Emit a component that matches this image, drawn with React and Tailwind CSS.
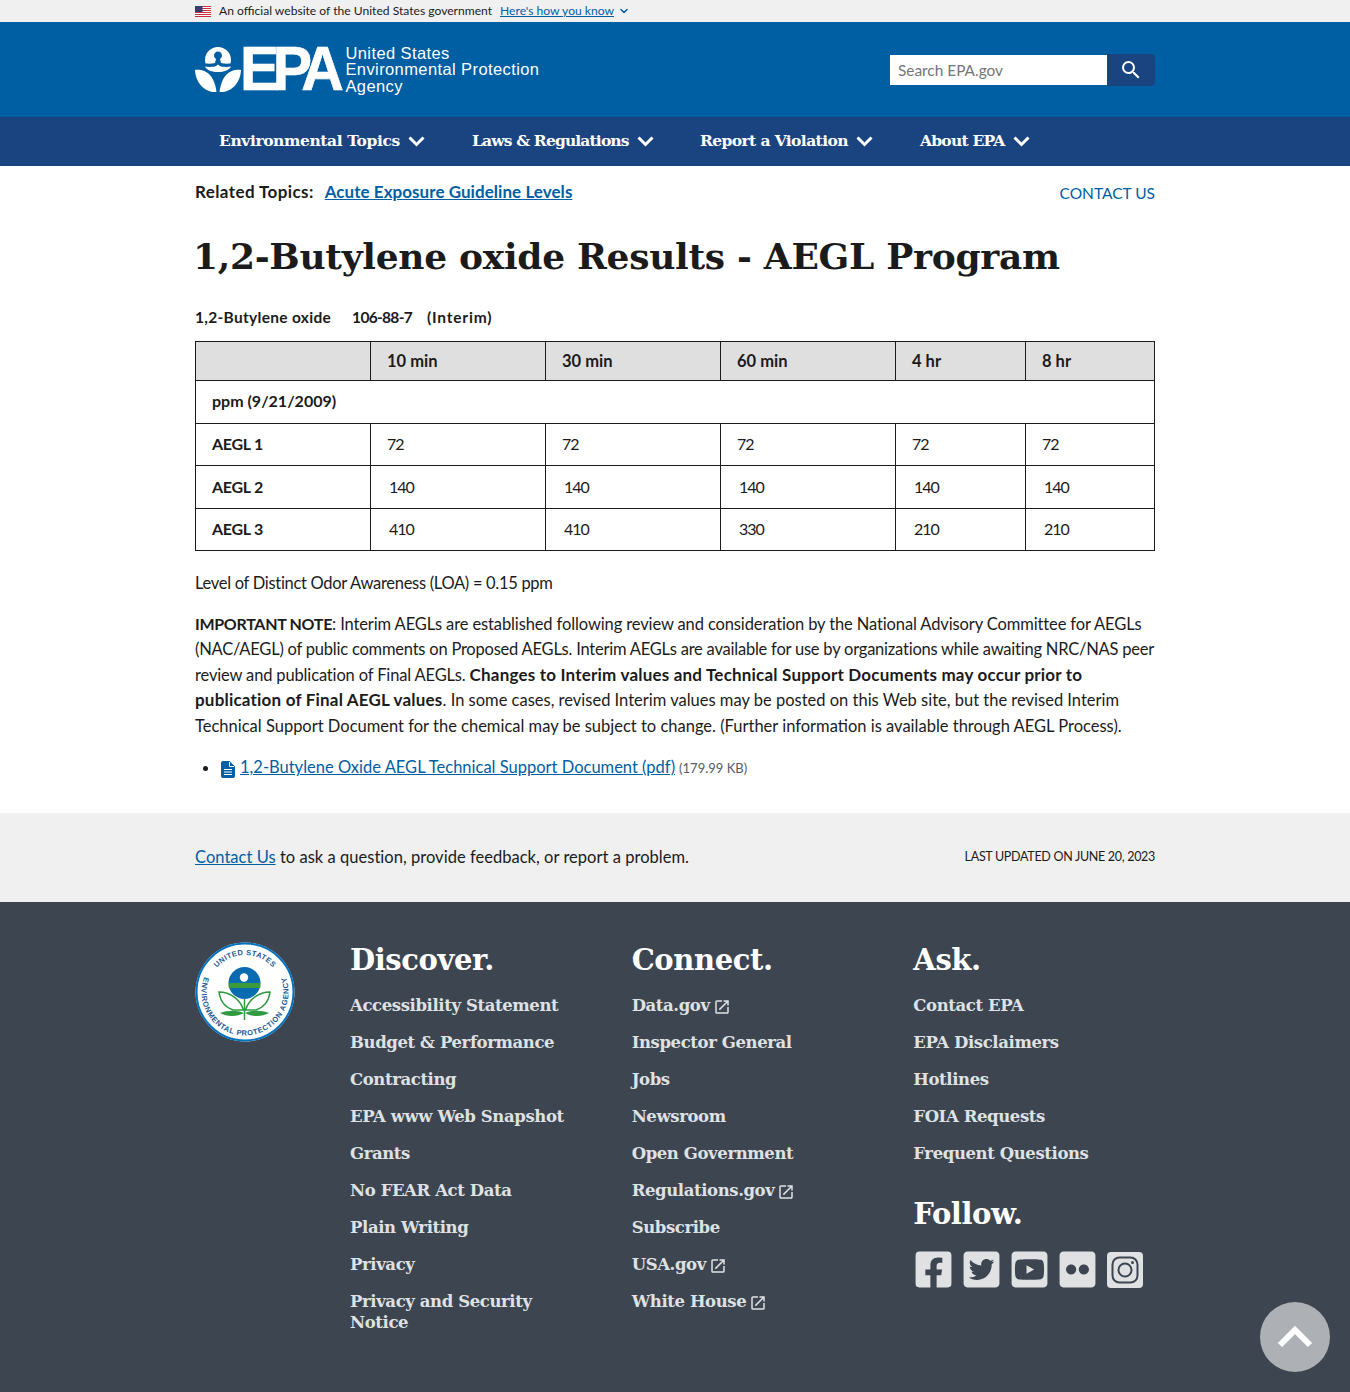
import React from 'react';
import { ChevronDown } from 'lucide-react';
import { FaFacebookSquare, FaTwitterSquare, FaYoutubeSquare, FaFlickr } from 'react-icons/fa';

const SERIF = "font-['DejaVu_Serif',serif]";
const SANS = "font-['Lato','Noto_Sans',sans-serif]";

const navItems = [
  { label: 'Environmental Topics', cls: 'w-[253px]', track: 'tracking-[-0.4px]' },
  { label: 'Laws & Regulations', cls: 'w-[228px]', track: 'tracking-[-0.85px]' },
  { label: 'Report a Violation', cls: 'w-[220px]', track: 'tracking-[-0.6px]' },
  { label: 'About EPA', cls: 'w-[200px]', track: 'tracking-[-0.75px]' },
];

const rows = [
  ['AEGL 1', '72', '72', '72', '72', '72'],
  ['AEGL 2', '140', '140', '140', '140', '140'],
  ['AEGL 3', '410', '410', '330', '210', '210'],
];

const discover = ['Accessibility Statement', 'Budget & Performance', 'Contracting', 'EPA www Web Snapshot', 'Grants', 'No FEAR Act Data', 'Plain Writing', 'Privacy', 'Privacy and Security Notice'];
const connect = [['Data.gov', true], ['Inspector General'], ['Jobs'], ['Newsroom'], ['Open Government'], ['Regulations.gov', true], ['Subscribe'], ['USA.gov', true], ['White House', true]];
const ask = ['Contact EPA', 'EPA Disclaimers', 'Hotlines', 'FOIA Requests', 'Frequent Questions'];

function Flag() {
  return (
    <svg width="16" height="11" viewBox="0 0 16 11" className="shrink-0">
      <rect width="16" height="11" fill="#fff" />
      <path d="M0 .5h16M0 2.5h16M0 4.5h16M0 6.5h16M0 8.5h16M0 10.5h16" stroke="#c8313e" strokeWidth="1" />
      <rect width="7.5" height="6" fill="#3c3b6e" />
    </svg>
  );
}

function EpaMark() {
  return (
    <svg width="46" height="46" viewBox="0 0 46 46" className="shrink-0">
      <path d="M10 13a13 13 0 0 1 26 0c0 1.500-.2 2.500-.6 3.500-3 .3-6.500.2-9.400-.5l-1-4a4 4 0 1 0-4 0l-1 4c-2.900.7-6.400.8-9.400.5-.4-1-.6-2-.6-3.500z" fill="#fff" />
      <path d="M10 19.500c4 .7 9 .5 11-.5l2-1.500 2 1.500c2 1 7 1.200 11 .5-2 4-7 5.500-13 5.500s-11-1.500-13-5.500z" fill="#fff" />
      <path d="M0 23c9-1 19 3 21.500 22C10 46 .5 36 0 23z" fill="#fff" />
      <path d="M46 23c-9-1-19 3-21.500 22C36 46 45.500 36 46 23z" fill="#fff" />
    </svg>
  );
}

function Seal() {
  return (
    <svg width="100" height="100" viewBox="0 0 100 100" className="shrink-0">
      <defs>
        <path id="sealTop" d="M13 50a37 37 0 0 1 74 0" />
        <path id="sealBottom" d="M10.600 31.600A43.500 43.500 0 1 0 89.400 31.600" />
      </defs>
      <circle cx="50" cy="50" r="49.500" fill="#fff" />
      <circle cx="50" cy="50" r="48.500" fill="none" stroke="#0071bc" strokeWidth="2" />
      <text fontSize="7.500" fontWeight="700" fill="#1d5a94" fontFamily="Liberation Sans, sans-serif" letterSpacing=".4" textAnchor="middle">
        <textPath href="#sealTop" startOffset="50%">UNITED STATES</textPath>
      </text>
      <text fontSize="7.500" fontWeight="700" fill="#1d5a94" fontFamily="Liberation Sans, sans-serif" letterSpacing=".55" textAnchor="middle">
        <textPath href="#sealBottom" startOffset="50%">ENVIRONMENTAL PROTECTION AGENCY</textPath>
      </text>
      <circle cx="49.500" cy="41" r="16" fill="#0b6bb0" />
      <rect x="33.700" y="41" width="31.600" height="5" fill="#3c9a3c" />
      <circle cx="49" cy="35.500" r="4.200" fill="#fff" />
      <path d="M49.500 57v21" stroke="#2f9a40" strokeWidth="1.500" />
      <path d="M48.500 68C45 57 35 50 24 50c1 9 6 15 14 18h10.500z" fill="#fff" stroke="#2f9a40" strokeWidth="1.500" />
      <path d="M50.500 68c3.500-11 13.500-18 24.500-18-1 9-6 15-14 18H50.500z" fill="#fff" stroke="#2f9a40" strokeWidth="1.500" />
      <path d="M25 71c8-3 17-3 24 0-7 4-17 4-24 0zM74 71c-8-3-17-3-24 0 7 4 17 4 24 0z" fill="#2f9a40" />
    </svg>
  );
}

function InstagramIcon() {
  return (
    <svg viewBox="0 0 36 36" className="w-9 h-9">
      <rect width="36" height="36" rx="4" fill="#dfe1e2" />
      <rect x="5.500" y="5.500" width="25" height="25" rx="7" fill="none" stroke="#3d4551" strokeWidth="2" />
      <circle cx="18" cy="18" r="6.500" fill="none" stroke="#3d4551" strokeWidth="2" />
      <circle cx="25.500" cy="10.500" r="1.500" fill="#3d4551" />
    </svg>
  );
}

function LaunchIcon() {
  return (
    <svg viewBox="0 0 24 24" className="inline-block w-[18px] h-[18px] ml-[3px] mb-[-2px] fill-[#dfe1e2]">
      <path d="M19 19H5V5h7V3H5a2 2 0 0 0-2 2v14a2 2 0 0 0 2 2h14c1.100 0 2-.9 2-2v-7h-2v7zM14 3v2h3.590l-9.830 9.830 1.410 1.410L19 6.410V10h2V3h-7z" />
    </svg>
  );
}

function SocialIcon({ Icon }) {
  return (
    <span className="w-9 h-9 flex items-center justify-center">
      <Icon className="w-[41px] h-[41px] shrink-0" />
    </span>
  );
}

function FooterLink({ children, ext }) {
  return (
    <a className={`${SERIF} block text-[#dfe1e2] text-[16.500px] font-bold leading-[21px] mb-4 tracking-[-0.4px]`}>
      {children}
      {ext && <LaunchIcon />}
    </a>
  );
}

function FooterHeading({ children, cls = '' }) {
  return <h2 className={`${SERIF} text-white text-[29px] font-bold leading-[38px] tracking-[-0.4px] ${cls}`}>{children}</h2>;
}

export default function App() {
  return (
    <div className={`${SANS} relative min-h-screen flex flex-col text-[#1b1b1b] text-[16.500px]`}>
      <div className="bg-[#f0f0f0] h-[22px]">
        <div className="w-[960px] mx-auto flex items-center h-full text-[12.100px]">
          <Flag />
          <span className="ml-2">An official website of the United States government</span>
          <a className="ml-2 text-[#005ea2] underline">Here's how you know</a>
          <ChevronDown className="w-3 h-3 ml-[4px] text-[#005ea2]" strokeWidth={3} />
        </div>
      </div>

      <header className="bg-[#005ea2] h-[95px]">
        <div className="w-[960px] mx-auto h-full flex items-center justify-between">
          <div className="flex items-center">
            <EpaMark />
            <span className="font-['Liberation_Sans',sans-serif] font-bold text-white text-[59px] leading-none tracking-[-6.500px] scale-y-[1.07] ml-[-1px] mr-[8px] [-webkit-text-stroke:0.6px_white]">EPA</span>
            <div className="font-['Liberation_Sans',sans-serif] text-white text-[16.500px] leading-[16.500px] tracking-[0.4px]">
              <div>United States</div>
              <div>Environmental Protection</div>
              <div>Agency</div>
            </div>
          </div>
          <div className="flex items-center">
            <input
              readOnly
              placeholder="Search EPA.gov"
              className="w-[217px] h-[30px] bg-white px-2 text-[15.400px] placeholder:text-[#71767a] outline-none"
            />
            <button className="w-[48px] h-[32px] bg-[#1a4480] rounded-r flex items-center justify-center pr-[1px]">
              <svg viewBox="0 0 24 24" className="w-6 h-6 fill-white">
                <path d="M15.500 14h-.79l-.28-.27A6.471 6.471 0 0 0 16 9.500 6.500 6.500 0 1 0 9.500 16c1.610 0 3.090-.59 4.230-1.570l.27.28v.79l5 4.990L20.490 19l-4.990-5zm-6 0C7.010 14 5 11.990 5 9.500S7.010 5 9.500 5 14 7.010 14 9.500 11.990 14 9.500 14z" />
              </svg>
            </button>
          </div>
        </div>
      </header>

      <nav className="bg-[#1a4480] h-[49px]">
        <div className="w-[960px] mx-auto h-full flex items-center pl-6 pb-[1px]">
          {navItems.map(item => (
            <div key={item.label} className={`${item.cls} flex items-center text-white`}>
              <span className={`${SERIF} text-[15.500px] font-bold ${item.track}`}>{item.label}</span>
              <svg width="17" height="11" viewBox="0 0 17 11" fill="none" className="ml-2 mt-[1px]">
                <path d="M1.500 1.500l7 7 7-7" stroke="#fff" strokeWidth="3" />
              </svg>
            </div>
          ))}
        </div>
      </nav>

      <main className="w-[960px] mx-auto">
        <div className="flex justify-between pt-[13px] h-[58px]">
          <div className="leading-[25px] font-bold text-[17px]">
            <span className="tracking-[0.4px]">Related Topics:</span>
            <a className="ml-[11px] text-[#005ea2] underline tracking-[0.05px]">Acute Exposure Guideline Levels</a>
          </div>
          <a className="text-[#005ea2] text-[15.500px] mt-[2px] leading-[25px]">CONTACT US</a>
        </div>

        <h1 className={`${SERIF} text-[36px] font-bold leading-[64px] tracking-[-0.3px] ml-[-2px]`}>
          1,2-Butylene oxide Results - AEGL Program
        </h1>

        <p className="flex font-bold text-[15.500px] leading-[20px] mt-[19px] mb-[14px]">
          <span className="tracking-[0.3px]">1,2-Butylene oxide</span>
          <span className="ml-[21px] tracking-[-0.7px]">106-88-7</span>
          <span className="ml-[15px] tracking-[0.8px]">(Interim)</span>
        </p>

        <table className="w-[959px] table-fixed border-collapse border border-[#1b1b1b] text-[16px]">
          <colgroup>
            <col className="w-[175px]" />
            <col className="w-[175px]" />
            <col className="w-[175px]" />
            <col className="w-[175px]" />
            <col className="w-[130px]" />
            <col className="w-[129px]" />
          </colgroup>
          <thead>
            <tr className="h-[39px] bg-[#dfdfdf] font-bold text-[16.500px]">
              {['', '10 min', '30 min', '60 min', '4 hr', '8 hr'].map((h, i) => (
                <th key={i} className="border border-[#1b1b1b] px-4 text-left">{h}</th>
              ))}
            </tr>
          </thead>
          <tbody>
            <tr className="h-[42.500px]">
              <td colSpan={6} className="border border-[#1b1b1b] px-4 font-bold pb-[2px]">ppm (9/21/2009)</td>
            </tr>
            {rows.map(row => (
              <tr key={row[0]} className="h-[42.500px]">
                {row.map((cell, i) => (
                  <td key={i} className={`border border-[#1b1b1b] px-4 ${i === 0 ? 'font-bold tracking-[-0.3px]' : 'tracking-[-1px]'} ${cell.length === 3 ? 'pl-[18px]' : ''}`}>{cell}</td>
                ))}
              </tr>
            ))}
          </tbody>
        </table>

        <p className="mt-[20px] leading-[25.500px] tracking-[-0.3px]">Level of Distinct Odor Awareness (LOA) = 0.15 ppm</p>

        <p className="mt-[15px] leading-[25.500px]">
          <b className="text-[16px] leading-none tracking-[-0.3px]">IMPORTANT NOTE</b>
          <span className="tracking-[-0.12px]">: Interim AEGLs are established following review and consideration by the National Advisory Committee for AEGLs </span>
          <span className="tracking-[-0.22px]">(NAC/AEGL) of public comments on Proposed AEGLs. Interim AEGLs are available for use by organizations while awaiting NRC/NAS peer </span>
          <span className="tracking-[-0.15px]">review and publication of Final AEGLs. </span>
          <b className="text-[17px] leading-none tracking-[0.2px]">Changes to Interim values and Technical Support Documents may occur prior to publication of Final AEGL values</b>
          <span>. In some cases, revised Interim values may be posted on this Web site, but the revised Interim Technical Support Document for the chemical may be subject to change. (Further information is available through AEGL Process).</span>
        </p>

        <ul className="mt-[16px] mb-[31px] list-disc pl-[25px] leading-[25.500px]">
          <li>
            <svg width="14" height="17" viewBox="0 0 14 17" className="inline-block mb-[-2px] ml-[1px] mr-[5px]">
              <path d="M0 2a2 2 0 0 1 2-2h6.500L14 5.500V15a2 2 0 0 1-2 2H2a2 2 0 0 1-2-2z" fill="#005ea2" />
              <path d="M8.500 1v4.500H13" fill="none" stroke="#fff" strokeWidth="1" />
              <path d="M3 8.500h8M3 11h8M3 13.500h8" stroke="#fff" strokeWidth="1" />
            </svg>
            <a className="text-[#005ea2] underline">1,2-Butylene Oxide AEGL Technical Support Document (pdf)</a>
            <span className="text-[13px] text-[#565c65] ml-1">(179.99 KB)</span>
          </li>
        </ul>
      </main>

      <div className="bg-[#f0f0f0] h-[89px]">
        <div className="w-[960px] mx-auto h-full flex items-center justify-between">
          <p className="tracking-[0.03px]"><a className="text-[#005ea2] underline">Contact Us</a> to ask a question, provide feedback, or report a problem.</p>
          <p className="text-[12.500px] tracking-[-0.3px]">LAST UPDATED ON JUNE 20, 2023</p>
        </div>
      </div>

      <footer className="bg-[#3d4551] flex-1 pt-[39px] pb-[48px]">
        <div className="w-[960px] mx-auto flex">
          <div className="w-[155px] pt-[1px] shrink-0"><Seal /></div>
          <div className="grid grid-cols-3 gap-x-[40px] flex-1">
            <div>
              <FooterHeading cls="mb-[16px]">Discover.</FooterHeading>
              {discover.map(l => <FooterLink key={l}>{l}</FooterLink>)}
            </div>
            <div>
              <FooterHeading cls="mb-[16px]">Connect.</FooterHeading>
              {connect.map(([l, ext]) => <FooterLink key={l} ext={ext}>{l}</FooterLink>)}
            </div>
            <div>
              <FooterHeading cls="mb-[16px]">Ask.</FooterHeading>
              {ask.map(l => <FooterLink key={l}>{l}</FooterLink>)}
              <FooterHeading cls="mt-[31px] mb-[19px]">Follow.</FooterHeading>
              <div className="flex gap-3 pl-[2px] text-[#dfe1e2]">
                <SocialIcon Icon={FaFacebookSquare} />
                <SocialIcon Icon={FaTwitterSquare} />
                <SocialIcon Icon={FaYoutubeSquare} />
                <SocialIcon Icon={FaFlickr} />
                <InstagramIcon />
              </div>
            </div>
          </div>
        </div>
      </footer>

      <button className="absolute left-[1260px] top-[1302px] w-[70px] h-[70px] rounded-full bg-[#adb0b5] flex items-center justify-center">
        <svg width="36" height="24" viewBox="0 0 36 24" fill="none">
          <path d="M3 20 18 5l15 15" stroke="#fff" strokeWidth="6" />
        </svg>
      </button>
    </div>
  );
}
